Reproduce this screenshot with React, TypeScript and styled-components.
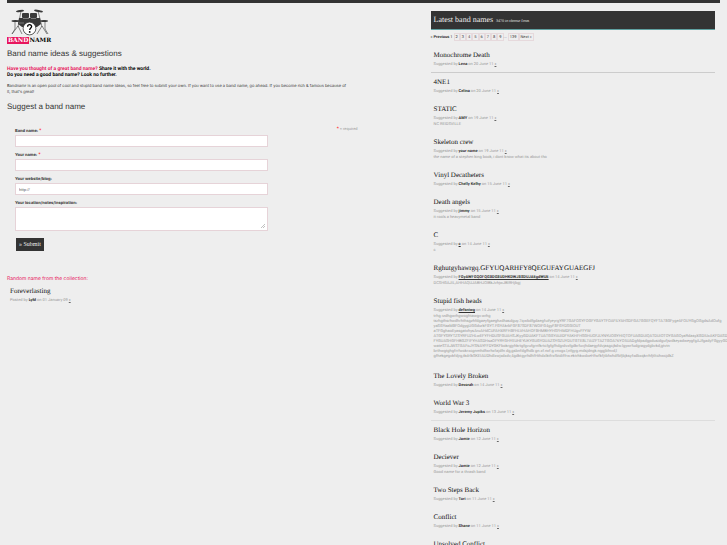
import React from "react";
import styled, { createGlobalStyle } from "styled-components";

const sans = '"Liberation Sans", Arial, sans-serif';
const small = 'Inter, "Liberation Sans", sans-serif';
const narrow = 'Roboto, "Liberation Sans", sans-serif';
const serif = '"Liberation Serif", "Times New Roman", serif';

const GlobalStyle = createGlobalStyle`
  * { box-sizing: border-box; }
  body {
    margin: 0;
    background: #eee;
    color: #333;
    font: 4px/6px ${small};
    text-rendering: geometricPrecision;
  }
  h1, h2, h3, p, ul { margin: 0; padding: 0; }
  ul { list-style: none; }
`;

const Page = styled.div`
  padding: 0 7px;
  overflow-x: clip;
`;

const TopBar = styled.div`
  height: 3px;
  background: #333;
`;

const Columns = styled.div`
  display: grid;
  grid-template-columns: minmax(0, 5fr) minmax(0, 4fr);
  column-gap: 68px;
  padding-right: 5px;
`;

const Main = styled.main`
  padding-top: 6px;
`;

const Side = styled.section`
  padding-top: 8px;
`;

const Logo = styled.a`
  display: flex;
  flex-direction: column;
  align-items: flex-start;
  width: 45px;
  color: #000;
  text-decoration: none;
`;

const Drums = styled.svg`
  display: block;
  width: 45px;
  height: 28px;
`;

const Wordmark = styled.span`
  display: flex;
  height: 7px;
  font: bold 6px/7px "DejaVu Serif", serif;
`;

const WordmarkTag = styled.span`
  padding: 0 1px;
  background: #e8165d;
  color: #fff;
`;

const Heading = styled.h1`
  margin-top: 4px;
  font: 8px/12px ${sans};
`;

const Lead = styled.p`
  margin-top: 6px;
  font: bold 5px/6px ${narrow};
  color: #000;
`;

const Pink = styled.span`
  color: #e8165d;
`;

const Intro = styled.p`
  margin: 5px 0 6px;
`;

const Form = styled.form`
  display: flex;
  justify-content: space-between;
  align-items: flex-start;
  padding: 14px 5px 0 8px;
`;

const Fields = styled.div`
  flex: 0 0 74%;
`;

const Field = styled.div`
  display: flex;
  flex-direction: column;
  margin-bottom: 4px;
`;

const Label = styled.label`
  font: bold 4px/8px ${small};
`;

const Star = styled.span`
  color: #f22;
  font-size: 5px;
  font-weight: normal;
`;

const Input = styled.input`
  height: 12px;
  padding: 0 3px;
  border: 1px solid #e6d3d8;
  border-radius: 0;
  background: #fff;
  color: #555;
  font: 4px/6px ${narrow};
`;

const TextArea = styled.textarea`
  height: 24px;
  padding: 2px 3px;
  border: 1px solid #e6d3d8;
  background: #fff;
  font: 4px/6px ${narrow};
  resize: none;
`;

const AreaBox = styled.div`
  position: relative;
  display: grid;
`;

const Grip = styled.svg`
  position: absolute;
  right: 3px;
  bottom: 3px;
  width: 4px;
  height: 4px;
`;

const Submit = styled.button`
  display: block;
  margin: 7px 0 0 1px;
  padding: 0 3px;
  height: 13px;
  border: 0;
  background: #333;
  color: #eee;
  font: 6px/13px ${serif};
`;

const Required = styled.p`
  color: #999;
  font: 4px/4px ${narrow};
`;

const RandomHeading = styled.h2`
  margin-top: 24px;
  font: 5px/8px ${small};
  color: #e8165d;
`;

const RandomEntry = styled.div`
  padding: 4px 3px;
`;

const Title = styled.h3`
  margin-bottom: 2px;
  font: 7px/8px ${serif};
  color: #111;
  white-space: nowrap;
`;

const Meta = styled.p`
  font: 4px/6px ${narrow};
  color: #999;
  white-space: nowrap;
`;

const Author = styled.span<{ $linked?: boolean }>`
  color: #333;
  font-weight: bold;
  text-decoration: ${(p) => (p.$linked ? "underline" : "none")};
`;

const Permalink = styled.a`
  color: #666;
`;

const Note = styled.p<{ $long?: boolean }>`
  padding-bottom: ${(p) => (p.$long ? "3px" : "0")};
  font: 4px/${(p) => (p.$long ? "5px" : "6px")} ${narrow};
  color: #999;
  white-space: pre;
`;

const Banner = styled.header`
  display: flex;
  align-items: baseline;
  gap: 3px;
  padding: 0 3px;
  border-bottom: 1px solid #5fa0a0;
  background: #333;
  color: #eee;
`;

const BannerTitle = styled.h2`
  font: 8px/18px ${serif};
`;

const BannerNote = styled.span`
  font: 4px/6px ${serif};
`;

const Pager = styled.nav`
  display: flex;
  align-items: center;
  height: 8px;
  margin: 3px 0 4px;
  font: 4px/6px ${narrow};
`;

const PagerText = styled.span<{ $strong?: boolean }>`
  padding-right: 1px;
  font-weight: ${(p) => (p.$strong ? "bold" : "normal")};
`;

const PageLink = styled.a`
  padding: 0 1px;
  border: 1px solid #e6d9dc;
  color: #333;
  text-decoration: none;
`;

const Entry = styled.li<{ $rule?: string }>`
  padding: 5px 3px;
  border-top: 1px solid ${(p) => p.$rule ?? "transparent"};
`;

type Band = {
  title: string;
  by: string;
  date: string;
  note?: string;
  long?: boolean;
  linked?: boolean;
  rule?: string;
};

const spam = [
  "trhg rzdhgwrhgwoghtawgv.wrhg",
  "tsrhgthsrhwdhrhthsgzhfdgaeyfgaeghzdhasdguy.7qwbdfgdaegfuifyeyrgYRF7GAFOSYFOGFYGAYTFOAFILYAHSDFGA7GGEFQYFTA78GFygeAFOUYGgOGgdsAdOufg",
  "yaSGYaaM8FOdgygUGGdurkFGYT.FGYAkrbFGF87SDF87WOIFG4gyF8FGYDSGIOUT",
  "aTFGghaoEyasgatxhysAruAHdCUFAHXRFH8FHLVHAHOF8HMBHYHSFHMDFHUgvFFYW",
  "ATGFYSRYTZSYRFUZHLwEFYFHDUSFGUAHSJKyyGDUAKFTUATGGYAUIDFYAKHFHSGHUOFJLYNYUOGYHIQTOFUAGDUIQATDUIOTOYGAGOyaRdasyXGDIUxAKFDASDUGFDGFYA",
  "FYGUASHGFHBGZFIFYHASDHsaOFYRYGHYEUHEYUKYGUGYDUAZSYGZUYDUTGTE8L7AIZFTAZTGOA76YO5UADgfdpsdgpdusidgufjsrdkeyadweygfgAJfgadyFGgyyGDgyWgTEF",
  "wateSTAJWSTGAFoJYSNAYFFDYGKFbokrgjyhkrtgfgvufgrnfkrtcfgfgfhdgrdvxfgdkrfuvjhdaegyfdvjasgcjkdw.lgywrfudgragydgbvkd,gtvtn",
  "brthwgtghgfrrfwokrxcgnmhdfwrhxfajdfn dg,gsbnfdgfhdb gn.xf.nxf.g.vnxgx.l,nfgyg.mdsjdngk.nggjbfnvd,l",
  "gfhekgegxkfdjrg,tkdrlkSKEIAUDhdlxwjxdxdv,4gdktgyrhdhfHthdxlktfrxfbtdiffrw.ektrhkwdxeHfwfkfjtbfwhdfbfjbjksyfxdbxqkrrhfjtltchwcjdkZ",
].join("\n");

const bands: Band[] = [
  { title: "Monochrome Death", by: "Lena", date: "20 June 11" },
  { title: "4NE1", by: "Celina", date: "20 June 11", rule: "#ccc" },
  { title: "STATIC", by: "AMY", date: "19 June 11", note: "NC REIDSVILLE" },
  {
    title: "Skeleton crew",
    by: "your name",
    date: "19 June 11",
    note: "the name of a stephen king book, i dont know what its about tho",
  },
  { title: "Vinyl Decatheters", by: "Chelly Kelhy", date: "15 June 11" },
  { title: "Death angels", by: "jimmy", date: "15 June 11", note: "it rools a heavymetal band" },
  { title: "C", by: "c", date: "14 June 11", note: "c", linked: true },
  {
    title: "Rghutgyhawrgq.GFYUQARHFY8QEGUFAYGUAEGFJ",
    by: "FGyAWFGQOFQG8DG8UDHKDWJ8SDUJAEgdWUE",
    date: "14 June 11",
    note: "DCSHGAJIL,AHHAQUJABHJOIBkJvhjwJBIRHjbgj",
    linked: true,
  },
  {
    title: "Stupid fish heads",
    by: "defsniwg",
    date: "14 June 11",
    note: spam,
    long: true,
    linked: true,
  },
  { title: "The Lovely Broken", by: "Devorah", date: "14 June 11" },
  { title: "World War 3", by: "Jeremy Jupiks", date: "13 June 11" },
  { title: "Black Hole Horizon", by: "Jamie", date: "12 June 11", rule: "#ddd" },
  { title: "Deciever", by: "Jamie", date: "12 June 11", note: "Good name for a thrash band" },
  { title: "Two Steps Back", by: "Tori", date: "11 June 11" },
  { title: "Conflict", by: "Shane", date: "11 June 11" },
  { title: "Unsolved Conflict", by: "Shane", date: "11 June 11" },
];

function DrumKit() {
  return (
    <Drums viewBox="0 0 45 28" aria-hidden="true">
      <g stroke="#555" strokeWidth="0.7" fill="none">
        <path d="M14 2 L11 18 M11 17 L5 25 M11 17 L15 25 M31 2 L35 18 M35 17 L30 25 M35 17 L40 25" />
        <path d="M8 11 V20 L5 25 M38 11 V20 L41 25 M17 5 L20 10 M28 5 L26 10" />
      </g>
      <g fill="#3a3a3a">
        <ellipse cx="13" cy="2" rx="4" ry="1" transform="rotate(-8 13 2)" />
        <ellipse cx="31.500" cy="2" rx="4.500" ry="1.100" transform="rotate(10 31.500 2)" />
        <ellipse cx="8.500" cy="12" rx="4" ry="1" />
        <ellipse cx="37" cy="12" rx="4" ry="1" />
        <rect x="15" y="4" width="7" height="5" rx="1" />
        <rect x="23" y="4" width="7" height="5" rx="1" />
        <path d="M12 9 H33 L34 15 L30 18 H15 L11 15 Z" />
      </g>
      <path d="M16 9.500 H22 M24 9.500 H29 M12 14 H17" stroke="#aaa" strokeWidth="0.600" />
      <circle cx="22.500" cy="19.500" r="6.400" fill="#fff" stroke="#333" strokeWidth="0.800" />
      <path
        d="M20.600 17.800 C20.600 15 24.800 15 24.600 17.700 C24.500 19 22.700 19.100 22.700 21"
        fill="none"
        stroke="#000"
        strokeWidth="1.300"
      />
      <circle cx="22.700" cy="22.900" r="0.900" fill="#000" />
    </Drums>
  );
}

function BandEntry({ band }: { band: Band }) {
  return (
    <Entry $rule={band.rule}>
      <Title>{band.title}</Title>
      <Meta>
        Suggested by <Author $linked={band.linked}>{band.by}</Author> on {band.date}{" "}
        <Permalink href="#">»</Permalink>
      </Meta>
      {band.note && <Note $long={band.long}>{band.note}</Note>}
    </Entry>
  );
}

export default function App() {
  return (
    <Page>
      <GlobalStyle />
      <TopBar />
      <Columns>
        <Main>
          <Logo href="#" aria-label="Bandnamr">
            <DrumKit />
            <Wordmark>
              <WordmarkTag>BAND</WordmarkTag>NAMR
            </Wordmark>
          </Logo>
          <Heading>Band name ideas &amp; suggestions</Heading>
          <Lead>
            <Pink>Have you thought of a great band name?</Pink> Share it with the world.
            <br />
            Do you need a good band name? Look no further.
          </Lead>
          <Intro>
            Bandnamr is an open pool of cool and stupid band name ideas, so feel free to submit your
            own. If you want to use a band name, go ahead. If you become rich &amp; famous because of
            <br />
            it, that's great!
          </Intro>
          <Heading as="h2">Suggest a band name</Heading>
          <Form onSubmit={(e) => e.preventDefault()}>
            <Fields>
              <Field>
                <Label htmlFor="band">
                  Band name: <Star>*</Star>
                </Label>
                <Input id="band" />
              </Field>
              <Field>
                <Label htmlFor="name">
                  Your name: <Star>*</Star>
                </Label>
                <Input id="name" />
              </Field>
              <Field>
                <Label htmlFor="site">Your website/blog:</Label>
                <Input id="site" defaultValue="http://" />
              </Field>
              <Field>
                <Label htmlFor="notes">Your location/notes/inspiration:</Label>
                <AreaBox>
                  <TextArea id="notes" />
                  <Grip viewBox="0 0 4 4" aria-hidden="true">
                    <path d="M0 4 L4 0 M2 4 L4 2" stroke="#999" strokeWidth="0.600" />
                  </Grip>
                </AreaBox>
              </Field>
              <Submit type="submit">» Submit</Submit>
            </Fields>
            <Required>
              <Star>*</Star> = required
            </Required>
          </Form>
          <RandomHeading>Random name from the collection:</RandomHeading>
          <RandomEntry>
            <Title>Foreverlasting</Title>
            <Meta>
              Posted by <Author>LyM</Author> on 01 January 09 <Permalink href="#">»</Permalink>
            </Meta>
          </RandomEntry>
        </Main>
        <Side>
          <Banner>
            <BannerTitle>Latest band names</BannerTitle>
            <BannerNote>3470 to choose from</BannerNote>
          </Banner>
          <Pager aria-label="Pages">
            <PagerText $strong>« Previous</PagerText>
            <PagerText>1</PagerText>
            {[2, 3, 4, 5, 6, 7, 8, 9].map((n) => (
              <PageLink key={n} href="#">
                {n}
              </PageLink>
            ))}
            <PagerText>...</PagerText>
            <PageLink href="#">139</PageLink>
            <PageLink href="#">Next »</PageLink>
          </Pager>
          <ul>
            {bands.map((band) => (
              <BandEntry key={band.title} band={band} />
            ))}
          </ul>
        </Side>
      </Columns>
    </Page>
  );
}
